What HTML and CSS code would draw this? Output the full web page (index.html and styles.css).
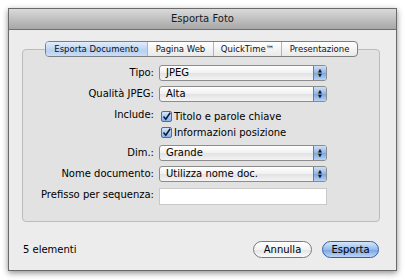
FILE: index.html
```html
<html>
    <head>
        <title>Esporta Foto</title>
        <link rel="stylesheet" href="styles.css">
    </head>
    <body>
        <div class="finestra">
            <div class="titolo">Esporta Foto</div>
            <div class="corpo">
                <div class="schede">
                    <div class="scheda attiva">Esporta Documento</div>
                    <div class="scheda">Pagina Web</div>
                    <div class="scheda">QuickTime™</div>
                    <div class="scheda">Presentazione</div>
                </div>
                <div class="pannello">
                    <form class="modulo">
                        <label class="etichetta">Tipo:</label>
                        <div class="menu"><span>JPEG</span><i class="frecce"><b>▲</b><b>▼</b></i></div>

                        <label class="etichetta">Qualità JPEG:</label>
                        <div class="menu"><span>Alta</span><i class="frecce"><b>▲</b><b>▼</b></i></div>

                        <label class="etichetta">Include:</label>
                        <div class="opzioni">
                            <div class="opzione">
                                <span class="casella"><svg width="9" height="9" viewBox="0 0 9 9"><path d="M1.5 4.5 L3.8 7.2 L8.2 0.8" fill="none" stroke="#0c1c40" stroke-width="1.6"/></svg></span>
                                Titolo e parole chiave
                            </div>
                            <div class="opzione">
                                <span class="casella"><svg width="9" height="9" viewBox="0 0 9 9"><path d="M1.5 4.5 L3.8 7.2 L8.2 0.8" fill="none" stroke="#0c1c40" stroke-width="1.6"/></svg></span>
                                Informazioni posizione
                            </div>
                        </div>

                        <label class="etichetta">Dim.:</label>
                        <div class="menu"><span>Grande</span><i class="frecce"><b>▲</b><b>▼</b></i></div>

                        <label class="etichetta">Nome documento:</label>
                        <div class="menu"><span>Utilizza nome doc.</span><i class="frecce"><b>▲</b><b>▼</b></i></div>

                        <label class="etichetta">Prefisso per sequenza:</label>
                        <div class="campo"></div>
                    </form>
                </div>
                <div class="piede">
                    <span class="conteggio">5 elementi</span>
                    <div class="bottoni">
                        <div class="bottone">Annulla</div>
                        <div class="bottone predefinito">Esporta</div>
                    </div>
                </div>
            </div>
        </div>
    </body>
</html>
```

FILE: styles.css
```css
body{
    margin: 0;
    background-color: #ffffff;
    font-family: "DejaVu Sans", Verdana, sans-serif;
    font-size: 10px;
    color: #000;
}
.finestra{
    margin: 8px 0 0 8px;
    width: 387px;
    height: 261px;
    background-color: #ececec;
    border: 1px solid #6a6a6a;
    box-shadow: 0 2px 6px rgba(0,0,0,0.45);
}
.titolo{
    height: 20px;
    line-height: 19px;
    text-align: center;
    background: linear-gradient(#dadada, #a7a7a7);
    border-bottom: 1px solid #6f6f6f;
    color: #1a1a1a;
}
.corpo{
    padding: 11px 14px 0 13px;
}
/* schede in alto */
.schede{
    position: relative;
    z-index: 1;
    display: flex;
    width: 311px;
    height: 14px;
    margin: 0 0 -8px 23px;
    border: 1px solid #7f7f7f;
    border-radius: 4px;
    overflow: hidden;
    background: linear-gradient(#ffffff, #e9e9e9);
}
.scheda{
    font-size: 8.5px;
    line-height: 14px;
    text-align: center;
    border-left: 1px solid #b4b4b4;
    color: #111;
}
.scheda:nth-child(1){ width: 101px; border-left: none; }
.scheda:nth-child(2){ width: 65px; }
.scheda:nth-child(3){ width: 67px; }
.scheda:nth-child(4){ width: 75px; }
.attiva{
    background: linear-gradient(#e2edfb, #b7d1f2 60%, #c9ddf6);
}
.pannello{
    width: 358px;
    height: 173px;
    border: 1px solid #bcbcbc;
    border-radius: 4px;
    background-color: #e2e2e2;
    box-sizing: border-box;
}
.modulo{
    display: grid;
    grid-template-columns: 131px 168px;
    column-gap: 5px;
    row-gap: 5px;
    margin: 0;
    padding-top: 15px;
}
.etichetta{
    text-align: right;
    line-height: 16px;
}
.menu{
    display: flex;
    justify-content: space-between;
    height: 16px;
    box-sizing: border-box;
    border: 1px solid #8c8c8c;
    border-radius: 3px;
    background: linear-gradient(#ffffff, #f0f0f0 50%, #e2e2e2 51%, #f4f4f4);
    overflow: hidden;
}
.menu span{
    padding-left: 6px;
    line-height: 14px;
}
.frecce{
    display: flex;
    flex-direction: column;
    justify-content: center;
    width: 12px;
    border-left: 1px solid #5d7fb0;
    background: linear-gradient(#cfe0f6, #8fb5e6 50%, #79a5e0 51%, #b9d3f3);
    font-style: normal;
}
.frecce b{
    font-size: 5px;
    line-height: 5px;
    text-align: center;
    color: #111;
}
.opzioni{
    display: flex;
    flex-direction: column;
    padding-top: 1px;
}
.opzione{
    display: flex;
    align-items: center;
    gap: 2px;
    height: 16px;
}
.casella{
    display: flex;
    align-items: center;
    justify-content: center;
    width: 11px;
    height: 11px;
    margin-left: 2px;
    box-sizing: border-box;
    border: 1px solid #4a6da3;
    border-radius: 2px;
    background: linear-gradient(#d7e6f9, #8ab3e8);
}
.campo{
    height: 17px;
    margin-top: 1px;
    box-sizing: border-box;
    background-color: #fff;
    border: 1px solid #c9c9c9;
}
.piede{
    display: flex;
    justify-content: space-between;
    align-items: center;
    padding: 19px 0 0 1px;
}
.bottoni{
    display: flex;
    gap: 10px;
    padding-right: 3px;
}
.bottone{
    width: 59px;
    height: 17px;
    line-height: 15px;
    box-sizing: border-box;
    text-align: center;
    border: 1px solid #7a7a7a;
    border-radius: 9px;
    background: linear-gradient(#ffffff, #f2f2f2 50%, #e3e3e3 51%, #fafafa);
}
.predefinito{
    width: 57px;
    border-color: #3a5f9e;
    background: linear-gradient(#d6e6fa, #95bbec 50%, #75a4e3 51%, #bcd6f6);
}
```
